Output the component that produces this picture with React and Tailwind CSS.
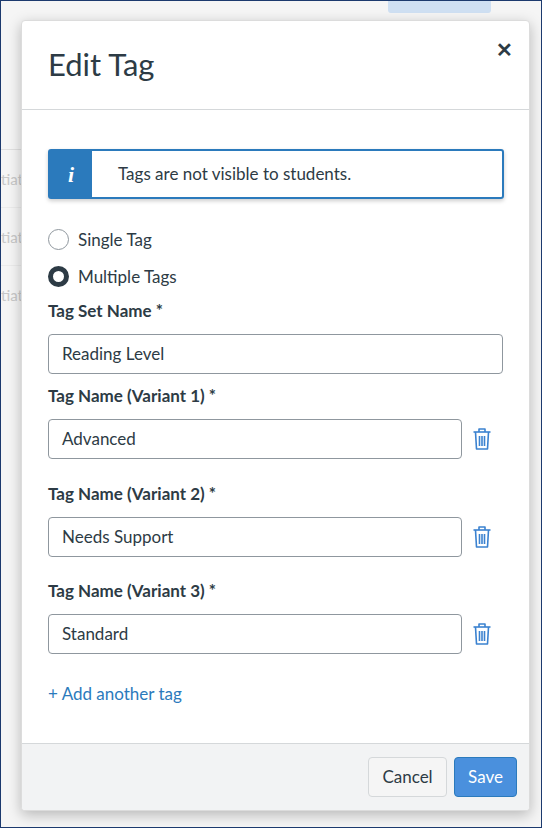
import React from "react";

function Trash() {
  return (
    <svg width="20" height="24" viewBox="0 0 20 24" fill="none" stroke="#3b82d0" strokeWidth="1.6" strokeLinejoin="round">
      <path d="M1.5 5h17" />
      <path d="M7 5V2h6v3" />
      <path d="M3.5 5l1 17h11l1-17" />
      <path d="M7.5 9v10M10 9v10M12.5 9v10" />
    </svg>
  );
}

function Field({ label, value, trash, className }) {
  return (
    <div className={`flex flex-col ${className}`}>
      <div className="text-[17px] font-bold text-[#2d3b45] leading-5 mb-[13px]">{label} *</div>
      <div className="flex items-center">
        <div className={`${trash ? "w-[414px]" : "w-[455px]"} h-[40px] border border-[#8f979e] rounded-[4px] px-[13px] flex items-center text-[17px] text-[#2d3b45]`}>
          {value}
        </div>
        {trash && <div className="ml-[10px]"><Trash /></div>}
      </div>
    </div>
  );
}

export default function App() {
  return (
    <div className="relative w-[542px] h-[828px] bg-[#f5f5f5] border border-[#1c3a6e] overflow-hidden" style={{ fontFamily: "Lato, 'Liberation Sans', sans-serif" }}>
      <div className="absolute left-[387px] top-0 w-[103px] h-[12px] bg-[#cfe0f3] rounded-b-[3px]" />
      <div className="absolute left-0 top-[148px] w-[30px] text-[15px] text-[#c8c8c8] flex flex-col">
        <div className="h-[58px] border-t border-[#e0e0e0] pt-[18px]">tiat</div>
        <div className="h-[58px] border-t border-[#ebebeb] pt-[18px]">tiat</div>
        <div className="h-[58px] border-t border-[#ebebeb] pt-[18px]">tiat</div>
      </div>
      <div className="absolute left-[20px] top-[19px] w-[509px] h-[791px] bg-white rounded-[4px] border border-[#dcdcdc] shadow-[0_4px_14px_rgba(0,0,0,0.25)] flex flex-col overflow-hidden">
        <div className="h-[89px] border-b border-[#d5d8da] flex items-center px-[26px] relative shrink-0">
          <div className="text-[31px] text-[#2d3b45] mt-[-2px]">Edit Tag</div>
          <div className="absolute right-[16px] top-[13px] text-[20px] font-bold text-[#2d3b45]">✕</div>
        </div>
        <div className="flex-1 px-[26px] pt-[39px] flex flex-col">
          <div className="w-[456px] h-[50px] border-2 border-[#2b7abc] rounded-[3px] flex shadow-[0_2px_4px_rgba(0,0,0,0.2)]">
            <div className="w-[42px] bg-[#2b7abc] flex items-center justify-center text-white text-[22px] font-bold italic" style={{ fontFamily: "'Liberation Serif', serif" }}>i</div>
            <div className="flex items-center pl-[26px] text-[17px] text-[#2d3b45]">Tags are not visible to students.</div>
          </div>
          <div className="mt-[28px] flex items-center gap-[9px] text-[17px] text-[#2d3b45]">
            <span className="w-[21px] h-[21px] rounded-full border border-[#8f979e]" />Single Tag
          </div>
          <div className="mt-[11px] flex items-center gap-[9px] text-[17px] text-[#2d3b45]">
            <span className="w-[21px] h-[21px] rounded-full border-[5px] border-[#2d3b45]" />Multiple Tags
          </div>
          <Field className="mt-[12px]" label="Tag Set Name" value="Reading Level" />
          <Field className="mt-[12px]" label="Tag Name (Variant 1)" value="Advanced" trash />
          <Field className="mt-[25px]" label="Tag Name (Variant 2)" value="Needs Support" trash />
          <Field className="mt-[24px]" label="Tag Name (Variant 3)" value="Standard" trash />
          <div className="mt-[27px] text-[17px] text-[#2b7abc]">+ Add another tag</div>
        </div>
        <div className="h-[67px] bg-[#f2f3f4] border-t border-[#d5d8da] flex items-center justify-end gap-[7px] px-[12px] shrink-0">
          <div className="h-[40px] w-[79px] justify-center flex items-center border border-[#d5d8da] rounded-[4px] bg-[#f5f5f5] text-[17px] text-[#2d3b45]">Cancel</div>
          <div className="h-[40px] w-[63px] justify-center flex items-center border border-[#2b7abc] rounded-[4px] bg-[#4a90dd] text-[17px] text-white">Save</div>
        </div>
      </div>
    </div>
  );
}
